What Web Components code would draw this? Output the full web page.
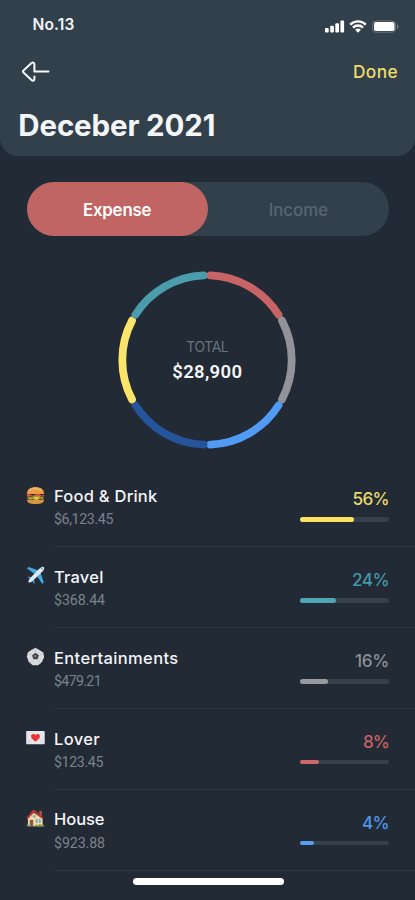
<!DOCTYPE html>
<html lang="en">
<head>
<meta charset="utf-8">
<title>Expenses</title>
<style>
html,body{margin:0;height:100%;background:#222a35}
body{font-family:Inter,Roboto,"Noto Sans",sans-serif;color:#f4f5f7;overflow:hidden}
</style>
</head>
<body>
<expense-screen></expense-screen>
<script>
const define = (name, html, setup) => customElements.define(name, class extends HTMLElement {
  connectedCallback() {
    if (this.shadowRoot) return;
    const root = this.attachShadow({mode: 'open'});
    const t = document.createElement('template');
    t.innerHTML = typeof html === 'function' ? html(this) : html;
    root.append(t.content.cloneNode(true));
    if (setup) setup(this);
  }
});

// Label whose tracking is adjusted so that it spans a given width.
define('tracked-label', el => `<style>
:host{display:block;width:max-content;white-space:nowrap;font-size:${el.getAttribute('size')}px;font-weight:${el.getAttribute('weight') || 500};line-height:20px}
</style><slot></slot>`, el => {
  const target = +el.getAttribute('span'), n = el.textContent.length;
  const natural = el.getBoundingClientRect().width;
  el.style.letterSpacing = ((target - natural) / n).toFixed(3) + 'px';
});

define('status-bar', `<style>
:host{display:flex;justify-content:space-between;align-items:center;height:20px;padding:15px 16px 0 32.5px}
svg{display:block;margin-top:1px}
</style>
<tracked-label size="15.5" weight="600" span="42">No.13</tracked-label>
<svg width="75" height="16" viewBox="0 0 75 16" fill="#fff">
<rect x="1" y="10" width="3.7" height="4.5" rx="1"/><rect x="6.2" y="7.8" width="3.7" height="6.7" rx="1"/><rect x="11.3" y="5.2" width="3.7" height="9.3" rx="1"/><rect x="16.4" y="2.5" width="3.7" height="12" rx="1"/>
<g fill="none" stroke="#fff" stroke-width="2.3"><path d="M26.2 6.6a11 11 0 0 1 15.6 0"/><path d="M29 9.6a7 7 0 0 1 10 0"/></g><path d="M31.1 11.8a4.2 4.2 0 0 1 5.8 0L34 14.8z"/>
<rect x="48.5" y="2.9" width="23" height="11.3" rx="3.2" fill="none" stroke="#66717b"/><rect x="50" y="4.1" width="20.5" height="9" rx="1.8"/><path d="M73 6.3c1.9.8 1.9 3.8 0 4.6z" fill="#7b858d"/>
</svg>`);

define('screen-header', `<style>
:host{display:block;box-sizing:border-box;height:156px;background:#32404b;border-radius:0 0 18px 18px}
nav{display:flex;justify-content:space-between;align-items:center;height:22px;padding:26px 17px 0 21px}
h1{margin:0;padding:32px 0 0 18.3px;font:inherit}
.done{color:#eddc6c}
svg{display:block}
</style>
<status-bar></status-bar>
<nav><svg width="30" height="22" viewBox="0 0 30 22" fill="none" stroke="#f7f8fa" stroke-width="2" stroke-linecap="round" stroke-linejoin="round"><path d="M27.5 10.5H13.4V3.2C13.4 1.5 11.8.9 10.5 2.1L2.5 9.5c-.8.7-.8 1.3 0 2l8 7.5c1.3 1.2 2.9.6 2.9-1.1v-2.4"/></svg>
<tracked-label class="done" size="17.3" span="45">Done</tracked-label></nav>
<h1><tracked-label size="29.5" weight="650" span="197">Deceber 2021</tracked-label></h1>`);

define('segment-switch', `<style>
:host{display:grid;grid-template-columns:1fr 1fr;height:54px;margin:26px 26px 0 26.5px;border-radius:27px;background:#32404b}
div{display:flex;align-items:center;justify-content:center;border-radius:27px;color:#596671;padding-top:1px;box-sizing:border-box}
.on{background:#c16464;color:#fff}
</style>
<div class="on"><tracked-label size="16.8" span="68.5" weight="600">Expense</tracked-label></div>
<div><tracked-label size="16.8" span="59.5">Income</tracked-label></div>`);

define('total-ring', () => {
  const colors = ['#c86466', '#919398', '#519bf4', '#25549a', '#fae56a', '#4b9dab'];
  const p = a => `${(89 + 84.7 * Math.sin(a * Math.PI / 180)).toFixed(2)} ${(89 - 84.7 * Math.cos(a * Math.PI / 180)).toFixed(2)}`;
  const arcs = colors.map((c, i) => `<path stroke="${c}" d="M${p(i * 60 + 2.3)}A84.7 84.7 0 0 1 ${p(i * 60 + 57.7)}"/>`).join('');
  return `<style>
:host{display:grid;width:178px;height:178px;margin:34.5px 0 0 118.3px}
svg,div{grid-area:1/1}
div{display:flex;flex-direction:column;align-items:center;justify-content:center;gap:5px;box-sizing:border-box}
.cap{color:#6a747d}
.sum{font-family:Roboto,sans-serif}
</style>
<svg width="178" height="178" viewBox="0 0 178 178" fill="none" stroke-width="7.8" stroke-linecap="round">${arcs}</svg>
<div><tracked-label class="cap" size="13.8" weight="400" span="42">TOTAL</tracked-label>
<tracked-label class="sum" size="18.5" weight="600" span="70">$28,900</tracked-label></div>`;
});

const icons = {
  burger: '<path d="M1 8.5C1 3 5 1 10 1s9 2 9 7.5z" fill="#e79c47"/><path d="M4 5c2-3 9-3 12-.5" stroke="#f6bd70" stroke-width="1.4" fill="none"/><path d="M1 14h18c0 4-3 5-9 5s-9-1-9-5z" fill="#dc933e"/><rect x="1" y="10.4" width="18" height="4.2" rx="2" fill="#683020"/><path d="M.8 9q2-1.8 4 0t5 0 5 0 4.4 0v2H1z" fill="#d65735"/><path d="M1 11.8h18l-2 2.2-2-.8-4 2.2-4-1.6-3 .6z" fill="#91bd3d"/><path d="M7 11h8l-4 3.5z" fill="#f6c33d"/>',
  plane: '<path d="M1 2.5L3 1l11 4-4 4zM15 6l3.7 11-1.5 2L11 10z" fill="#45a9df"/><path d="M1.5 12l1.3-1 4 1-1.4 1.7zM8.4 14l1 4-1 1-2.2-4z" fill="#3993c9"/><path d="M18.8 1.2c1 1.3-.5 3.7-2 5.2L7 15.8c-1.8 1.3-3.5 2-4.3 1.5-.5-.8.2-2.5 1.5-4.3l9.5-9.8C15.2 1.7 17.5.2 18.8 1.2z" fill="#dce8ef"/><path d="M16 2.2l1.8 1.6" stroke="#395d78" stroke-width="1"/>',
  ball: '<path d="M10 .8l4 2.3 4.3 2.6.7 5-2.2 5.2-4 3.2H7l-4.2-3.5L.9 10l1.2-4.4L6 3z" fill="#dadbdc"/><path d="M10 6l3.6 2.7-1.3 4.3H7.7L6.4 8.7z" fill="#42464b"/><circle cx="9.8" cy="9.6" r="1.2" fill="#858c90"/><path d="M10 5.5V1M14.3 8.7l4-2M12.7 13.7l2.4 3.5M7.3 13.7l-2.7 3M5.7 8.7l-4-1.8" stroke="#bcbebf" stroke-width=".8"/>',
  letter: '<rect x=".2" y="3.2" width="19.5" height="14" rx=".8" fill="#e6e7eb"/><path d="M.5 17l6-6M19.5 17l-6-6" stroke="#cacdd2"/><path d="M10 14.4C7.5 12.5 5.3 10.8 5.3 8.8c0-2.6 3.3-3.3 4.7-1.1 1.4-2.2 4.7-1.5 4.7 1.1 0 2-2.2 3.7-4.7 5.6z" fill="#ed3336"/>',
  house: '<path d="M14 2h2.7v6H14z" fill="#a75a49"/><path d="M2 9l6-5 9.5 6v8.2H2z" fill="#eed5aa"/><path d="M.5 9.5L6.7 1.5 9 1l9.6 8.5-1.2 1L8.5 3.8 2 10.5z" fill="#bf3536"/><path d="M4 11.5h3.5v6.7H4z" fill="#875a42"/><path d="M10.4 10.8h5v3.7h-5z" fill="#6ca9c5"/><path d="M12.9 10.8v3.7" stroke="#fff3d9"/><path d="M.7 18.5c0-2.6 2-3 2.7-1.3M9 18.5c0-2 3-2.4 4-1.2 1-1.8 3-1.1 3.3-.3 1.7-1.4 3-.2 3 1.5z" fill="#7b9e43"/><circle cx="8.6" cy="7.7" r="1.3" fill="#7babba"/>'
};

define('category-row', el => {
  const a = n => el.getAttribute(n);
  return `<style>
:host{display:grid;grid-template-columns:28px 1fr;height:80.9px;padding-left:26px}
svg{display:block;margin-top:19px}
.body{display:flex;justify-content:space-between;border-bottom:1.6px solid #2d3843;box-sizing:border-box;padding-right:26px}
.text{padding-top:19.4px;display:grid;grid-auto-rows:20px;row-gap:3.5px;align-content:start}
.share{padding-top:22.5px;width:89px;display:flex;flex-direction:column;align-items:flex-end;gap:8px}
.amount{color:#7a838c;font-family:Roboto,sans-serif}
.pct{color:${a('color')}}
.track{width:89px;height:4.8px;border-radius:3px;background:#36414c}
.fill{width:${a('fill')}px;height:100%;border-radius:3px;background:${a('bar')}}
</style>
<svg width="19" height="19" viewBox="0 0 20 20">${icons[a('icon')]}</svg>
<div class="body"><div class="text"><tracked-label size="16.5" weight="550" span="${a('name-span')}">${el.textContent.replace('&', '&amp;')}</tracked-label>
<tracked-label class="amount" size="14.2" weight="400" span="${a('amount-span')}">${a('amount')}</tracked-label></div>
<div class="share"><tracked-label class="pct" size="17.2" span="${a('pct-span')}">${a('pct')}</tracked-label><div class="track"><div class="fill"></div></div></div></div>`;
});

define('expense-screen', `<style>
:host{display:flex;flex-direction:column;position:relative;width:415px;height:900px;background:#222a35;overflow:hidden}
main{padding-top:18px}
.home{position:absolute;left:132.5px;top:877.5px;width:151px;height:7px;border-radius:4px;background:#fff}
</style>
<screen-header></screen-header>
<segment-switch></segment-switch>
<total-ring></total-ring>
<main>
<category-row icon="burger" name-span="103.5" amount="$6,123.45" amount-span="59" pct="56%" pct-span="36.5" color="#e9d96d" bar="#f9e263" fill="54">Food &amp; Drink</category-row>
<category-row icon="plane" name-span="49.5" amount="$368.44" amount-span="51" pct="24%" pct-span="37" color="#4796a5" bar="#4ea6b5" fill="36">Travel</category-row>
<category-row icon="ball" name-span="124.5" amount="$479.21" amount-span="47" pct="16%" pct-span="34" color="#8a9099" bar="#999a9f" fill="27.5">Entertainments</category-row>
<category-row icon="letter" name-span="46" amount="$123.45" amount-span="49" pct="8%" pct-span="26" color="#c86164" bar="#d06869" fill="18.5">Lover</category-row>
<category-row icon="house" name-span="50.5" amount="$923.88" amount-span="51" pct="4%" pct-span="27" color="#5094e6" bar="#569ff3" fill="14">House</category-row>
</main>
<div class="home"></div>`);
</script>
</body>
</html>
